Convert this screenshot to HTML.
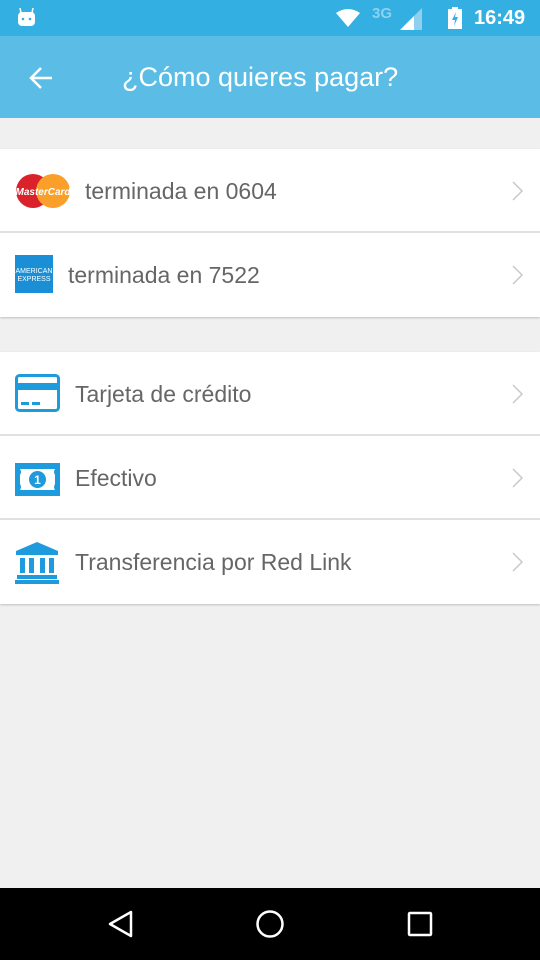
<!DOCTYPE html>
<html><head><meta charset="utf-8"><style>
*{margin:0;padding:0;box-sizing:border-box}
body{width:540px;height:960px;background:#f0f0f0;font-family:"Liberation Sans",sans-serif;position:relative;overflow:hidden}
.sb{position:absolute;top:0;left:0;width:540px;height:36px;background:#33afe2;color:#fff}
.tb{position:absolute;top:36px;left:0;width:540px;height:82px;background:#5bbde6;color:#fff}
.tb .t{position:absolute;left:122px;top:26px;font-size:27px}
.card{position:absolute;left:0;width:540px;background:#fff;box-shadow:0 1px 2px rgba(0,0,0,.2)}
.row{height:84px;position:relative;border-bottom:2px solid #e0e0e0}
.row:last-child{border-bottom:none}
.row .l{position:absolute;top:29px;font-size:23px;color:#666}
.chev{position:absolute;right:16px;top:32px}
.nav{position:absolute;top:888px;left:0;width:540px;height:72px;background:#000}
</style></head><body>
<div class="sb">
<svg style="position:absolute;left:17px;top:7px" width="20" height="20" viewBox="0 0 20 20"><rect x="1" y="5" width="17" height="14" rx="4" fill="#fff"/><line x1="4" y1="6" x2="3" y2="1" stroke="#fff" stroke-width="1.5"/><line x1="15" y1="6" x2="16" y2="1" stroke="#fff" stroke-width="1.5"/><circle cx="6" cy="12" r="1.3" fill="#33afe2"/><circle cx="13" cy="12" r="1.3" fill="#33afe2"/></svg>
<svg style="position:absolute;left:336px;top:9px" width="24" height="18" viewBox="0 0 24 18"><path d="M0 4 Q12 -4 24 4 L12 18 Z" fill="#fff"/></svg>
<div style="position:absolute;left:372px;top:5px;font-size:15px;font-weight:bold;color:#8fd0ee">3G</div>
<svg style="position:absolute;left:400px;top:8px" width="22" height="22"><path d="M22 0 L22 22 L0 22Z" fill="#8fd0ee"/><path d="M14 8 L14 22 L0 22Z" fill="#fff"/></svg>
<svg style="position:absolute;left:448px;top:7px" width="16" height="22"><rect x="0" y="2" width="14" height="20" fill="#fff"/><rect x="4" y="0" width="6" height="3" fill="#fff"/><path d="M8 5 L4 13 L7 13 L6 19 L10 10 L7 10Z" fill="#33afe2"/></svg>
<div style="position:absolute;left:474px;top:7px;font-size:20px;font-weight:bold">16:49</div>
</div>
<div class="tb">
<svg style="position:absolute;left:28px;top:29px" width="26" height="26" viewBox="0 0 26 26"><path d="M24 13 H4 M13 3 L3 13 L13 23" stroke="#fff" stroke-width="2.5" fill="none"/></svg>
<div class="t">¿Cómo quieres pagar?</div>
</div>
<div class="card" style="top:149px">
<div class="row">
<svg style="position:absolute;left:15px;top:24px" width="56" height="36"><circle cx="18" cy="18" r="17" fill="#d9222a"/><circle cx="38" cy="18" r="17" fill="#f99f2a"/><text x="28" y="22" font-size="10" font-style="italic" font-weight="bold" fill="#fff" text-anchor="middle" font-family="Liberation Sans">MasterCard</text></svg>
<div class="l" style="left:85px">terminada en 0604</div>
<svg class="chev" width="12" height="20"><path d="M1 1 L10 10 L1 19" stroke="#c8c8c8" stroke-width="1.5" fill="none"/></svg>
</div>
<div class="row">
<svg style="position:absolute;left:15px;top:22px" width="38" height="38"><rect width="38" height="38" fill="#1b8fd6"/><text x="19" y="18" font-size="7" fill="#fff" text-anchor="middle">AMERICAN</text><text x="19" y="26" font-size="7" fill="#fff" text-anchor="middle">EXPRESS</text></svg>
<div class="l" style="left:68px">terminada en 7522</div>
<svg class="chev" width="12" height="20"><path d="M1 1 L10 10 L1 19" stroke="#c8c8c8" stroke-width="1.5" fill="none"/></svg>
</div>
</div>
<div class="card" style="top:352px">
<div class="row">
<svg style="position:absolute;left:15px;top:22px" width="46" height="40"><rect x="1.5" y="1.5" width="42" height="35" rx="3" fill="none" stroke="#1e9bdc" stroke-width="3"/><rect x="1.5" y="9" width="42" height="7" fill="#1e9bdc"/><rect x="6" y="28" width="8" height="3" fill="#1e9bdc"/><rect x="17" y="28" width="8" height="3" fill="#1e9bdc"/></svg>
<div class="l" style="left:75px">Tarjeta de crédito</div>
<svg class="chev" width="12" height="20"><path d="M1 1 L10 10 L1 19" stroke="#c8c8c8" stroke-width="1.5" fill="none"/></svg>
</div>
<div class="row">
<svg style="position:absolute;left:15px;top:27px" width="46" height="34"><path d="M0 0 H45 V33 H0 Z" fill="#1e9bdc"/><path d="M5 6 H40 Q38 9 40 12 V21 Q38 24 40 27 H5 Q7 24 5 21 V12 Q7 9 5 6Z" fill="#fff"/><circle cx="22.5" cy="16.5" r="8.5" fill="#1e9bdc"/><text x="22.5" y="21" font-size="12" font-weight="bold" fill="#fff" text-anchor="middle">1</text></svg>
<div class="l" style="left:75px">Efectivo</div>
<svg class="chev" width="12" height="20"><path d="M1 1 L10 10 L1 19" stroke="#c8c8c8" stroke-width="1.5" fill="none"/></svg>
</div>
<div class="row">
<svg style="position:absolute;left:15px;top:22px" width="46" height="42"><path d="M22 0 L43 9 V13 H1 V9 Z" fill="#1e9bdc"/><rect x="5" y="16" width="5" height="15" fill="#1e9bdc"/><rect x="14" y="16" width="5" height="15" fill="#1e9bdc"/><rect x="25" y="16" width="5" height="15" fill="#1e9bdc"/><rect x="34" y="16" width="5" height="15" fill="#1e9bdc"/><rect x="2" y="33" width="40" height="4" fill="#1e9bdc"/><rect x="0" y="38" width="44" height="4" fill="#1e9bdc"/></svg>
<div class="l" style="left:75px">Transferencia por Red Link</div>
<svg class="chev" width="12" height="20"><path d="M1 1 L10 10 L1 19" stroke="#c8c8c8" stroke-width="1.5" fill="none"/></svg>
</div>
</div>
<div class="nav">
<svg style="position:absolute;left:107px;top:22px" width="28" height="30"><path d="M24 2 L3 14 L24 26Z" stroke="#fff" stroke-width="2.5" fill="none" stroke-linejoin="round"/></svg>
<svg style="position:absolute;left:255px;top:21px" width="30" height="30"><circle cx="15" cy="15" r="12.5" stroke="#fff" stroke-width="2.5" fill="none"/></svg>
<svg style="position:absolute;left:407px;top:23px" width="28" height="28"><rect x="2" y="2" width="22" height="22" rx="1" stroke="#fff" stroke-width="2.5" fill="none"/></svg>
</div>
</body></html>
